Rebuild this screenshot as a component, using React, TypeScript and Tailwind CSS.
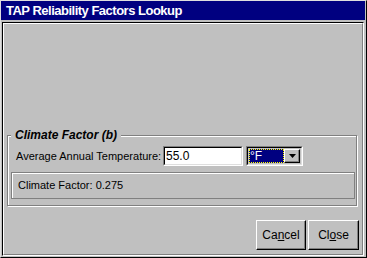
import React from "react";

const sans = { fontFamily: '"Liberation Sans", Arial, sans-serif' };

function Button({ children }: { children: React.ReactNode }) {
  return (
    <button
      className="flex h-[30px] w-full items-center justify-center border-t border-l border-t-white border-l-white border-r border-b border-r-black border-b-black bg-[#c0c0c0] text-[12px] text-black shadow-[inset_-1px_-1px_0_#808080]"
      style={sans}
    >
      {children}
    </button>
  );
}

export default function App() {
  return (
    <div
      className="flex h-[258px] w-[367px] flex-col border-t border-l border-t-[#dfdfdf] border-l-[#dfdfdf] border-r border-b border-r-black border-b-black bg-[#c0c0c0] pr-[1px]"
      style={sans}
    >
      {/* title bar */}
      <div className="flex h-[19px] items-center bg-[#000080] pl-[5px]">
        <span className="text-[13px] font-bold tracking-[-0.5px] text-white">
          TAP Reliability Factors Lookup
        </span>
      </div>

      {/* client area */}
      <div className="mx-[1px] mt-[2px] mb-[1px] flex flex-1 flex-col border-t border-l border-t-black border-l-black border-r border-b border-r-white border-b-white">
        <div className="flex flex-1 flex-col border-t border-l border-t-white border-l-white border-r border-b border-r-[#808080] border-b-[#808080]">
          <fieldset className="mt-[104px] ml-[3px] w-[350px] border border-[#808080] px-0 pb-[6px] shadow-[1px_1px_0_white,inset_1px_1px_0_white]">
            <legend className="ml-[3px] bg-[#c0c0c0] px-[4px] text-[12px] leading-[14px] font-bold italic text-black">
              Climate Factor (b)
            </legend>

            <div className="mt-[4px] flex h-[20px] items-center">
              <div className="w-[155px] pl-[8px] text-[11px] text-black">
                Average Annual Temperature:
              </div>
              <div className="flex h-[20px] w-[80px] items-center border-t border-l border-t-[#808080] border-l-[#808080] border-r border-b border-r-white border-b-white">
                <div className="flex h-full w-full items-center border-t border-l border-t-black border-l-black border-r border-b border-r-[#dfdfdf] border-b-[#dfdfdf] bg-white pl-[1px] text-[12px] text-black">
                  55.0
                </div>
              </div>
              <div className="ml-[3px] flex h-[20px] w-[57px] border-t border-l border-t-[#808080] border-l-[#808080] border-r border-b border-r-white border-b-white">
                <div className="flex flex-1 border-t border-l border-t-black border-l-black border-r border-b border-r-[#dfdfdf] border-b-[#dfdfdf] bg-[#c0c0c0] p-[1px]">
                  <div className="flex flex-1 items-center border border-dotted border-[#ffff00] bg-[#000080] text-[12px] leading-none text-white">
                    °F
                  </div>
                  <div className="flex w-[16px] items-center justify-center border-t border-l border-t-white border-l-white border-r border-b border-r-black border-b-black shadow-[inset_-1px_-1px_0_#808080]">
                    <svg width="7" height="4" viewBox="0 0 7 4">
                      <path d="M0 0h7L3.5 4z" fill="black" />
                    </svg>
                  </div>
                </div>
              </div>
            </div>

            <div className="mt-[6px] ml-[3px] flex h-[27px] w-[344px] items-center border border-[#808080] pl-[6px] text-[11px] text-black shadow-[inset_1px_1px_0_white]">
              Climate Factor: 0.275
            </div>
          </fieldset>

          <div className="mt-auto flex justify-end gap-[2px] pr-[3px] pb-[4px]">
            <div className="w-[50px]">
              <Button>
                <span>
                  Ca<u className="underline-offset-1">n</u>cel
                </span>
              </Button>
            </div>
            <div className="w-[51px]">
              <Button>
                <span>
                  Cl<u className="underline-offset-1">o</u>se
                </span>
              </Button>
            </div>
          </div>
        </div>
      </div>
    </div>
  );
}
